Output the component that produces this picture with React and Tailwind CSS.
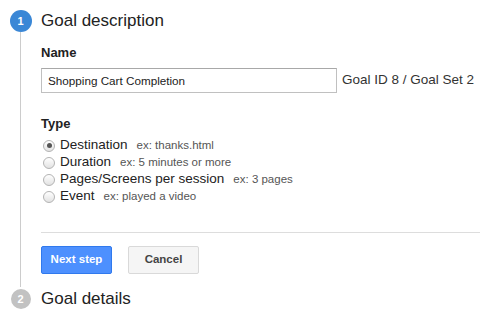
import React, { useState } from "react";

const types = [
  { label: "Destination", hint: "ex: thanks.html" },
  { label: "Duration", hint: "ex: 5 minutes or more" },
  { label: "Pages/Screens per session", hint: "ex: 3 pages" },
  { label: "Event", hint: "ex: played a video" },
];

const Radio = ({ checked }) => (
  <span className="w-[12px] h-[12px] rounded-full border border-[#b3b3b3] bg-gradient-to-b from-[#ffffff] to-[#e2e2e2] flex items-center justify-center shrink-0">
    {checked && <span className="w-[5px] h-[5px] rounded-full bg-[#555]" />}
  </span>
);

const App = () => {
  const [name, setName] = useState("Shopping Cart Completion");
  const [type, setType] = useState(0);

  return (
    <div
      className="w-[480px] h-[320px] bg-white overflow-hidden text-[#222]"
      style={{ fontFamily: '"Liberation Sans", Arial, sans-serif' }}
    >
      {/* Step 1 */}
      <div className="flex">
        <div className="w-[41px] flex flex-col items-center pt-[10px] shrink-0">
          <div className="w-[22px] h-[22px] rounded-full bg-[#3a87d6] text-white text-[11px] font-bold flex items-center justify-center">
            1
          </div>
          <div className="w-px flex-1 bg-[#cccccc]" />
        </div>

        <div className="flex-1 pb-[13px]">
          <h2 className="mt-[10px] h-[22px] leading-[22px] text-[17px] text-[#222]">
            Goal description
          </h2>

          <div className="mt-[13px] text-[13px] leading-[15px] font-bold">Name</div>
          <div className="mt-[8px] flex items-center h-[25px]">
            <input
              className="w-[296px] h-[25px] border border-[#c0c0c0] border-t-[#a8a8a8] px-[6px] text-[11.7px] text-[#222] outline-none"
              value={name}
              onChange={(e) => setName(e.target.value)}
            />
            <span className="ml-[5px] text-[13.5px] text-[#333] whitespace-nowrap">
              Goal ID 8 / Goal Set 2
            </span>
          </div>

          <div className="mt-[23px] text-[13px] leading-[15px] font-bold">Type</div>
          <div className="mt-[6px] flex flex-col">
            {types.map((t, i) => (
              <label
                key={t.label}
                className="h-[17px] flex items-center ml-[2px] cursor-pointer"
                onClick={() => setType(i)}
              >
                <Radio checked={type === i} />
                <span className="ml-[5px] text-[13.5px] text-[#222]">{t.label}</span>
                <span className="ml-[9px] text-[11.5px] text-[#555]">{t.hint}</span>
              </label>
            ))}
          </div>

          <div className="mt-[27px] h-px bg-[#dddddd]" />

          <div className="mt-[13px] flex gap-[16px]">
            <button className="w-[71px] h-[28px] rounded-[2px] bg-[#4d90fe] border border-[#3079ed] text-white text-[11.5px] font-bold">
              Next step
            </button>
            <button className="w-[71px] h-[28px] rounded-[2px] bg-[#f5f5f5] border border-[#d9d9d9] text-[#444] text-[11.5px] font-bold">
              Cancel
            </button>
          </div>
        </div>
      </div>

      {/* Step 2 */}
      <div className="flex">
        <div className="w-[41px] flex justify-center pt-[2px] shrink-0">
          <div className="w-[20px] h-[20px] rounded-full bg-[#c2c2c2] text-white text-[11px] font-bold flex items-center justify-center">
            2
          </div>
        </div>
        <h2 className="pt-[2px] leading-[20px] text-[17px] text-[#222]">Goal details</h2>
      </div>
    </div>
  );
};

export default App;
